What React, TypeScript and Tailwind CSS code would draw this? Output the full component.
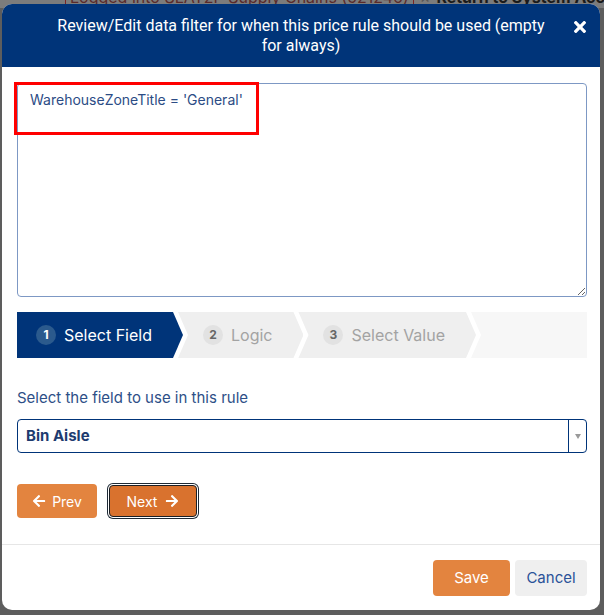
import React from "react";
import { FaArrowLeft, FaArrowRight } from "react-icons/fa";

function CloseIcon() {
  return (
    <svg width="12" height="12" viewBox="0 80 352 352" fill="currentColor">
      <path d="M242.72 256l100.07-100.07c12.28-12.28 12.28-32.19 0-44.48l-22.24-22.24c-12.28-12.28-32.19-12.28-44.48 0L176 189.28 75.930 89.21c-12.28-12.28-32.190-12.28-44.48 0L9.21 111.45c-12.28 12.28-12.28 32.19 0 44.48L109.28 256 9.21 356.07c-12.28 12.28-12.28 32.19 0 44.48l22.24 22.24c12.28 12.28 32.2 12.28 44.48 0L176 322.72l100.07 100.07c12.28 12.28 32.2 12.28 44.48 0l22.24-22.24c12.28-12.28 12.28-32.19 0-44.48L242.72 256z" />
    </svg>
  );
}

function Step({ n, label, active, first }: { n: number; label: string; active?: boolean; first?: boolean }) {
  return (
    <div
      className={
        "flex items-center h-full shrink-0 pr-[31px] " +
        (first
          ? "pl-[19px] [clip-path:polygon(0_0,calc(100%_-_10px)_0,100%_50%,calc(100%_-_10px)_100%,0_100%)] "
          : "pl-[25px] -ml-[5px] [clip-path:polygon(0_0,calc(100%_-_10px)_0,100%_50%,calc(100%_-_10px)_100%,0_100%,10px_50%)] ") +
        (active ? "bg-[#003479]" : "bg-[#efefef]")
      }
    >
      <div
        className={
          "w-[20px] h-[20px] rounded-full flex items-center justify-center text-[12px] font-bold mr-[8px] " +
          (active ? "bg-[#2b5a8d] text-white" : "bg-[#e2e2e2] text-[#666666]")
        }
      >
        {n}
      </div>
      <span className={"text-[16px] leading-[20px] " + (active ? "text-white" : "text-[#a3a3a3]")}>{label}</span>
    </div>
  );
}

export default function App() {
  return (
    <div className="relative w-[604px] h-[615px] overflow-hidden bg-[#5d5d5d] pt-[4px] pl-[2px] font-['Inter',sans-serif]">
      <div className="absolute left-0 top-0 w-full h-[8px] bg-[#7c7c7c]" />
      <div className="absolute left-[65px] top-[-13px] whitespace-nowrap text-[16px] leading-[18px] flex items-center gap-[6px]">
        <span className="border border-[#7a2424] px-[4px] text-[#5a2a2a]">Logged into SLAT2P Supply Chains (521246)</span>
        <span className="text-[#555]">×</span>
        <span className="font-bold text-[#1a1a1a]">Return to System Account</span>
      </div>

      <div className="relative w-[598px] bg-white rounded-[10px] flex flex-col overflow-hidden">
        <div className="relative bg-[#003479] text-white text-center px-[48px] pt-[12px] pb-[11px] text-[16px] leading-[20px] font-['Roboto',sans-serif]">
          Review/Edit data filter for when this price rule should be used (empty for always)
          <div className="absolute right-[14px] top-[17px] text-white">
            <CloseIcon />
          </div>
        </div>

        <div className="pl-[15px] pr-[13px] pt-[16px] flex flex-col">
          <div className="relative">
            <textarea
              defaultValue="WarehouseZoneTitle = 'General'"
              className="block w-full h-[214px] border border-[#7d98c4] rounded-[4px] px-[12px] pt-[6px] text-[14px] leading-[20px] text-[#2c4c85] outline-none font-['Inter',sans-serif]"
            />
            <div className="absolute left-[-3px] top-[-1px] w-[245px] h-[53px] border-[3px] border-[#ff0000] pointer-events-none" />
          </div>

          <div className="mt-[15px] flex h-[46px]">
            <Step n={1} label="Select Field" active first />
            <Step n={2} label="Logic" />
            <Step n={3} label="Select Value" />
            <div className="flex-1 -ml-[5px] bg-[#f7f7f7] [clip-path:polygon(0_0,100%_0,100%_100%,0_100%,10px_50%)]" />
          </div>

          <div className="mt-[30px] text-[15px] leading-[20px] text-[#2e4f87]">Select the field to use in this rule</div>

          <div className="mt-[11px] h-[34px] border border-[#003479] rounded-[4px] flex items-stretch">
            <div className="flex-1 flex items-center pl-[8px] text-[15px] font-bold text-[#1d3b6f]">Bin Aisle</div>
            <div className="w-[18px] border-l border-[#003479] flex items-center justify-center">
              <svg width="6" height="5" viewBox="0 0 6 5">
                <path d="M0 0h6L3 5z" fill="#9a9a9a" />
              </svg>
            </div>
          </div>

          <div className="mt-[31px] flex items-center">
            <button className="h-[34px] w-[80px] rounded-[4px] bg-[#e3843f] text-white text-[14px] flex items-center justify-center gap-[6px]">
              <FaArrowLeft size={14} />
              <span>Prev</span>
            </button>
            <button className="ml-[12px] h-[32px] w-[88px] rounded-[4px] bg-[#d9722e] border border-[#1b1f24] shadow-[0_0_0_1px_#ffffff,0_0_0_2px_#1e2a36] text-white text-[14px] flex items-center justify-center gap-[8px]">
              <span>Next</span>
              <FaArrowRight size={14} />
            </button>
          </div>
        </div>

        <div className="mt-[26px] border-t border-[#e6e6e6] pt-[15px] pb-[14px] pr-[13px] flex justify-end gap-[5px]">
          <button className="h-[36px] w-[77px] rounded-[4px] bg-[#e3843f] text-white text-[15px]">Save</button>
          <button className="h-[36px] w-[72px] rounded-[4px] bg-[#efefef] text-[#2a5298] text-[15px]">Cancel</button>
        </div>
      </div>
    </div>
  );
}
